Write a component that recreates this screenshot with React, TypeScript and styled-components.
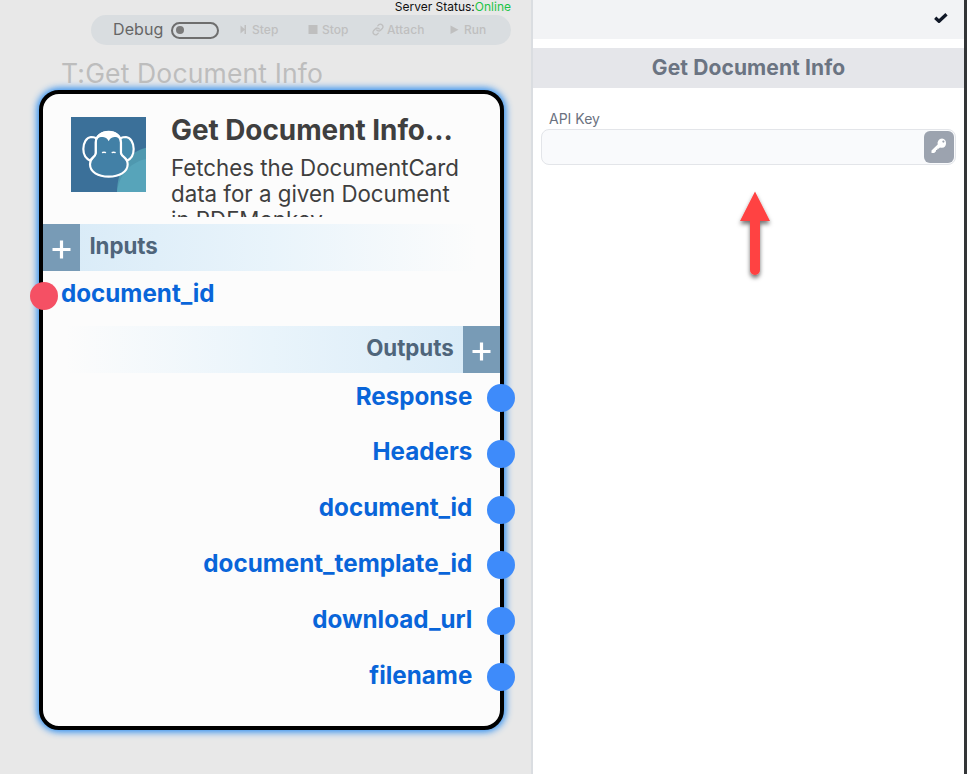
import React from "react";
import styled, { createGlobalStyle } from "styled-components";

const GlobalStyle = createGlobalStyle`
  * { box-sizing: border-box; }
  body { margin: 0; font-family: Inter, "Liberation Sans", sans-serif; overflow: hidden; }
  svg { display: block; flex: none; }
`;

const Screen = styled.div`
  display: flex;
  width: 967px;
  height: 774px;
  background: #fff;
`;

const Canvas = styled.main`
  flex: none;
  width: 533px;
  background: #e8e8e8;
  border-right: 2px solid #dadde1;
`;

const ServerStatus = styled.div`
  height: 15px;
  padding-right: 20px;
  text-align: right;
  font-size: 12px;
  line-height: 14px;
  color: #111;
`;

const Online = styled.span`
  color: #1cc446;
`;

const Toolbar = styled.div`
  display: flex;
  align-items: center;
  width: 420px;
  height: 30px;
  margin-left: 91px;
  padding-left: 22px;
  border-radius: 15px;
  background: #d9dde0;
`;

const DebugLabel = styled.span`
  width: 58px;
  padding-bottom: 2px;
  font-size: 16px;
  letter-spacing: 0.1px;
  color: #666;
`;

const Toggle = styled.span`
  display: flex;
  align-items: center;
  width: 48px;
  height: 17px;
  margin-right: 21px;
  padding-left: 3px;
  border: 2px solid #6e6e6e;
  border-radius: 9px;
`;

const Knob = styled.span`
  width: 8px;
  height: 8px;
  border-radius: 50%;
  background: #7b7b7b;
`;

const ToolButton = styled.span<{ $width: number; $gap: number }>`
  display: flex;
  align-items: center;
  width: ${(p) => p.$width}px;
  padding-bottom: 1px;
  gap: ${(p) => p.$gap}px;
  font-size: 12px;
  font-weight: 500;
  letter-spacing: 0.05px;
  color: #bfbfbf;
`;

const NodeCaption = styled.div`
  height: 45px;
  padding: 12px 0 0 61px;
  font-size: 26.5px;
  line-height: 32px;
  letter-spacing: 0.15px;
  color: #bdbdbd;
`;

const NodeCard = styled.section`
  width: 465px;
  height: 640px;
  margin-left: 39px;
  border: 4px solid #000;
  border-radius: 20px;
  background: #fcfcfc;
  box-shadow: 0 0 7px 2px #2a8cf0;
`;

const NodeHeader = styled.header`
  display: flex;
  height: 130px;
  padding: 23px 0 0 28px;
`;

const NodeText = styled.div`
  width: 300px;
  height: 100px;
  margin-left: 25px;
  overflow: hidden;
  color: #3f3f3f;
`;

const NodeTitle = styled.h1`
  margin: 0;
  font-size: 27.9px;
  font-weight: 700;
  line-height: 26px;
  letter-spacing: -0.03px;
  white-space: nowrap;
`;

const NodeDescription = styled.p`
  margin: 12px 0 0;
  font-size: 22.3px;
  line-height: 26px;
  white-space: nowrap;
`;

const SectionBar = styled.div<{ $end?: boolean }>`
  display: flex;
  flex-direction: ${(p) => (p.$end ? "row-reverse" : "row")};
  height: 46.5px;
  background: linear-gradient(${(p) => (p.$end ? "to left" : "to right")}, #d7eaf7, #e9f4fb 50%, #fcfcfc 95%);
`;

const AddButton = styled.span`
  display: flex;
  align-items: center;
  justify-content: center;
  width: 37.4px;
  padding-top: 4px;
  background: #789bb6;
`;

const SectionLabel = styled.span`
  padding: 0 9px;
  font-size: 22.3px;
  font-weight: 700;
  line-height: 44px;
  letter-spacing: -0.03px;
  color: #4f657b;
`;

const InputList = styled.div`
  height: 55.8px;
`;

const PortRow = styled.div<{ $end?: boolean }>`
  display: flex;
  align-items: center;
  justify-content: ${(p) => (p.$end ? "flex-end" : "flex-start")};
  height: ${(p) => (p.$end ? 55.8 : 50)}px;
  gap: ${(p) => (p.$end ? 15 : 3.5)}px;
  margin: ${(p) => (p.$end ? "0 -15.3px 0 0" : "0 0 0 -13.5px")};
`;

const OutputList = styled.div`
  margin-top: -2.6px;
`;

const PortName = styled.span`
  padding-bottom: 4px;
  font-size: 24.2px;
  font-weight: 700;
  color: #0965d9;
`;

const Port = styled.span<{ $color: string }>`
  flex: none;
  width: 28px;
  height: 28px;
  border-radius: 50%;
  background: ${(p) => p.$color};
`;

const Panel = styled.aside`
  position: relative;
  flex: none;
  width: 434px;
  border-right: 3px solid #333537;
`;

const PanelTop = styled.div`
  display: flex;
  justify-content: flex-end;
  height: 39px;
  padding: 11px 15px 0 0;
  background: #f2f3f5;
`;

const PanelTitle = styled.h2`
  height: 40px;
  margin: 9px 0 0;
  text-align: center;
  font-size: 21px;
  font-weight: 700;
  line-height: 39px;
  letter-spacing: 0.1px;
  color: #6b7482;
  background: #e5e6ea;
`;

const FieldLabel = styled.label`
  display: block;
  height: 41px;
  padding: 21px 0 0 16px;
  font-size: 14px;
  line-height: 20px;
  color: #6b7280;
`;

const Field = styled.div`
  display: flex;
  justify-content: flex-end;
  width: 415px;
  height: 36px;
  margin-left: 8px;
  padding: 1px;
  border: 1px solid #e3e5e9;
  border-radius: 8px;
  background: #f9fafc;
`;

const KeyButton = styled.span`
  display: flex;
  align-items: center;
  justify-content: center;
  width: 30px;
  height: 32px;
  padding-bottom: 3px;
  border-radius: 6px;
  background: #9ca3af;
`;

const Pointer = styled.svg`
  position: absolute;
  left: 197px;
  top: 184px;
`;

const MonkeyLogo = () => (
  <svg width="75" height="75" viewBox="0 0 225 225">
    <rect width="225" height="225" fill="#3b7099" />
    <path d="M138 225C139 160 170 104 225 92V225Z" fill="#4f98af" />
    <path d="M138 225C143 181 172 137 225 126V225Z" fill="#57a4ba" />
    <g stroke="#fff" strokeWidth="6.5" strokeLinejoin="round">
      <path
        d="M74 108V76C74 57 92 45 113 45S150 57 150 76V108C152 119 170 121 170 142C170 165 145 179 113 179S57 165 57 142C57 121 74 120 74 108Z"
        fill="#4280a6"
      />
      <path d="M76 64C68 60 64 60 60 60C46 61 37 78 37 96C37 112 45 125 58 131C61 121 74 120 74 108V76Z" fill="#3b7099" />
      <path d="M148 64C156 60 160 60 165 60C179 61 188 78 188 96C188 112 181 125 168 131C165 121 152 119 150 108V76Z" fill="#458aac" />
    </g>
    <path d="M72 78C71 54 92 41 113 41S153 54 152 78C147 64 138 59 130 60C121 61 117 65 113 73C109 65 105 61 96 60C85 59 77 64 72 78Z" fill="#fff" />
    <path d="M93 107Q99 104 105 107M122 107Q128 104 134 107" fill="none" stroke="#fff" strokeWidth="4.500" />
  </svg>
);

const Plus = () => (
  <svg width="19" height="19" viewBox="0 0 19 19" stroke="#fff" strokeWidth="3.2">
    <path d="M0.500 9.500H18.500M9.500 0.500V18.500" />
  </svg>
);

const StepIcon = () => (
  <svg width="7" height="10" viewBox="0 0 7 10" fill="#bfbfbf">
    <path d="M0.500 0.500V8.500L4.500 5V9H6V0H4.500V4Z" />
  </svg>
);

const StopIcon = () => (
  <svg width="10" height="10" viewBox="0 0 10 10">
    <path d="M0.500 0H9.500V9H0.500Z" fill="#bfbfbf" />
  </svg>
);

const LinkIcon = () => (
  <svg width="12" height="13" viewBox="0 0 24 24" fill="none" stroke="#bfbfbf" strokeWidth="2.6" strokeLinecap="round">
    <path d="M9.500 13a5 5 0 0 0 7.500.5l4-4a5.200 5.200 0 0 0-7.200-7.200L11.500 4.700" />
    <path d="M14.500 11a5 5 0 0 0-7.500-.5l-4 4a5.200 5.200 0 0 0 7.200 7.200l2.300-2.400" />
  </svg>
);

const RunIcon = () => (
  <svg width="9" height="10" viewBox="0 0 9 10">
    <path d="M0.500 0.500V9L8.500 4.750Z" fill="#bfbfbf" />
  </svg>
);

const CheckIcon = () => (
  <svg width="16" height="14" viewBox="0 0 16 14">
    <path d="M2.200 6.800L6 10.200L13.500 3.200" fill="none" stroke="#111827" strokeWidth="3.300" strokeLinejoin="round" />
  </svg>
);

const KeyIcon = () => (
  <svg width="16" height="16" viewBox="0 0 16 16">
    <path
      fill="#fff"
      fillRule="evenodd"
      d="M11 0.500A4.700 4.700 0 0 1 11 9.800Q9.800 9.800 9 9.400L7.500 10.800H6.300V12H5V13.200L3.200 15H0.500V12.500L6.700 6.500A4.700 4.700 0 0 1 11 0.500ZM12.400 2.500A1.100 1.100 0 1 0 12.400 4.700A1.100 1.100 0 1 0 12.400 2.500Z"
    />
  </svg>
);

const outputs = ["Response", "Headers", "document_id", "document_template_id", "download_url", "filename"];

export default function App() {
  return (
    <Screen>
      <GlobalStyle />
      <Canvas>
        <ServerStatus>
          Server Status:<Online>Online</Online>
        </ServerStatus>
        <Toolbar>
          <DebugLabel>Debug</DebugLabel>
          <Toggle>
            <Knob />
          </Toggle>
          <ToolButton $width={68} $gap={5}><StepIcon />Step</ToolButton>
          <ToolButton $width={64} $gap={4}><StopIcon />Stop</ToolButton>
          <ToolButton $width={78} $gap={3}><LinkIcon />Attach</ToolButton>
          <ToolButton $width={50} $gap={5}><RunIcon />Run</ToolButton>
        </Toolbar>
        <NodeCaption>T:Get Document Info</NodeCaption>
        <NodeCard>
          <NodeHeader>
            <MonkeyLogo />
            <NodeText>
              <NodeTitle>Get Document Info...</NodeTitle>
              <NodeDescription>
                Fetches the DocumentCard<br />
                data for a given Document<br />
                in PDFMonkey
              </NodeDescription>
            </NodeText>
          </NodeHeader>
          <SectionBar>
            <AddButton><Plus /></AddButton>
            <SectionLabel>Inputs</SectionLabel>
          </SectionBar>
          <InputList>
            <PortRow>
              <Port $color="#f55064" />
              <PortName>document_id</PortName>
            </PortRow>
          </InputList>
          <SectionBar $end>
            <AddButton><Plus /></AddButton>
            <SectionLabel>Outputs</SectionLabel>
          </SectionBar>
          <OutputList>
            {outputs.map((name) => (
              <PortRow $end key={name}>
                <PortName>{name}</PortName>
                <Port $color="#3e8bfa" />
              </PortRow>
            ))}
          </OutputList>
        </NodeCard>
      </Canvas>
      <Panel>
        <PanelTop><CheckIcon /></PanelTop>
        <PanelTitle>Get Document Info</PanelTitle>
        <FieldLabel>API Key</FieldLabel>
        <Field>
          <KeyButton><KeyIcon /></KeyButton>
        </Field>
        <Pointer width="50" height="105" viewBox="0 0 50 105">
          <defs>
            <filter id="pointer-shadow" x="-30%" y="-20%" width="160%" height="140%">
              <feDropShadow dx="0" dy="3" stdDeviation="2" floodColor="#000" floodOpacity="0.55" />
            </filter>
          </defs>
          <path d="M25 7.500L40 37H30V86A5 5 0 0 1 20 86V37H10Z" fill="#ff4242" filter="url(#pointer-shadow)" />
        </Pointer>
      </Panel>
    </Screen>
  );
}
